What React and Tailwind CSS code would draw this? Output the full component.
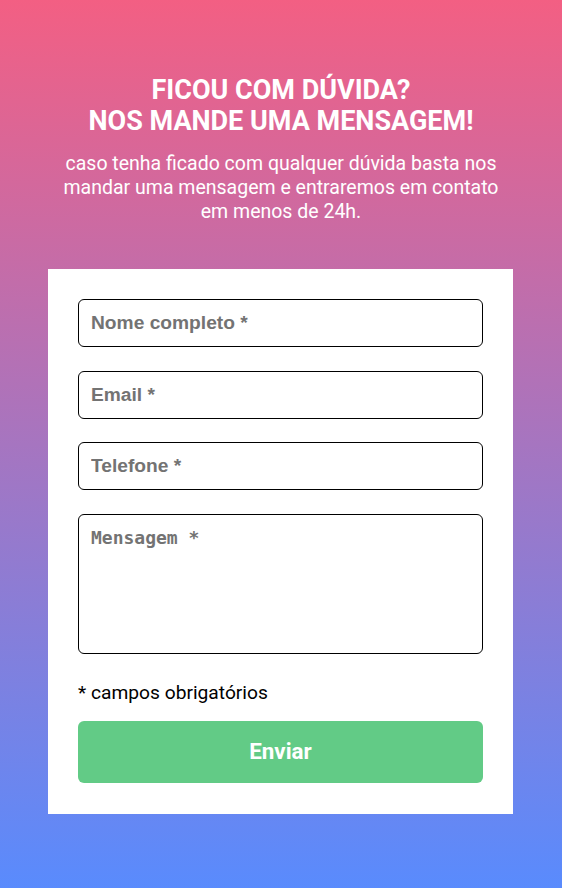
import React from 'react';

const App = () => {
  return (
    <div className="min-h-[888px] w-full bg-[linear-gradient(to_bottom,#f35f83,#598bfd)] font-['Roboto',sans-serif] pt-[75px] pb-[74px]">
      {/* Header */}
      <div className="text-center text-white px-[40px]">
        <h1 className="text-[27px] font-bold leading-[31px]">
          FICOU COM DÚVIDA?
          <br />
          NOS MANDE UMA MENSAGEM!
        </h1>
        <p className="mt-[15px] mx-auto max-w-[446px] text-[19.5px] leading-[24px]">
          caso tenha ficado com qualquer dúvida basta nos mandar uma mensagem e entraremos em contato em menos de 24h.
        </p>
      </div>

      {/* Form */}
      <form className="bg-white mx-[48px] w-[465px] mt-[45px] px-[30px] pt-[30px] pb-[31px] flex flex-col">
        <input
          type="text"
          placeholder="Nome completo *"
          className="h-[48px] border border-black rounded-[6px] px-[12px] font-['Liberation_Sans',sans-serif] font-bold text-[19.2px] placeholder:text-[#737373] outline-none"
        />
        <input
          type="email"
          placeholder="Email *"
          className="mt-[24px] h-[48px] border border-black rounded-[6px] px-[12px] font-['Liberation_Sans',sans-serif] font-bold text-[19.2px] placeholder:text-[#737373] outline-none"
        />
        <input
          type="tel"
          placeholder="Telefone *"
          className="mt-[23px] h-[48px] border border-black rounded-[6px] px-[12px] font-['Liberation_Sans',sans-serif] font-bold text-[19.2px] placeholder:text-[#737373] outline-none"
        />
        <textarea
          placeholder="Mensagem *"
          className="mt-[24px] h-[140px] border border-black rounded-[6px] px-[12px] py-[12px] font-['DejaVu_Sans_Mono',monospace] font-bold text-[18px] leading-[22px] placeholder:text-[#737373] outline-none resize-none"
        />
        <p className="mt-[27px] text-[19.2px] leading-[24px] text-black">* campos obrigatórios</p>
        <button
          type="button"
          className="mt-[16px] h-[62px] rounded-[6px] bg-[#62cb86] text-white text-[22.4px] font-bold"
        >
          Enviar
        </button>
      </form>
    </div>
  );
};

export default App;
